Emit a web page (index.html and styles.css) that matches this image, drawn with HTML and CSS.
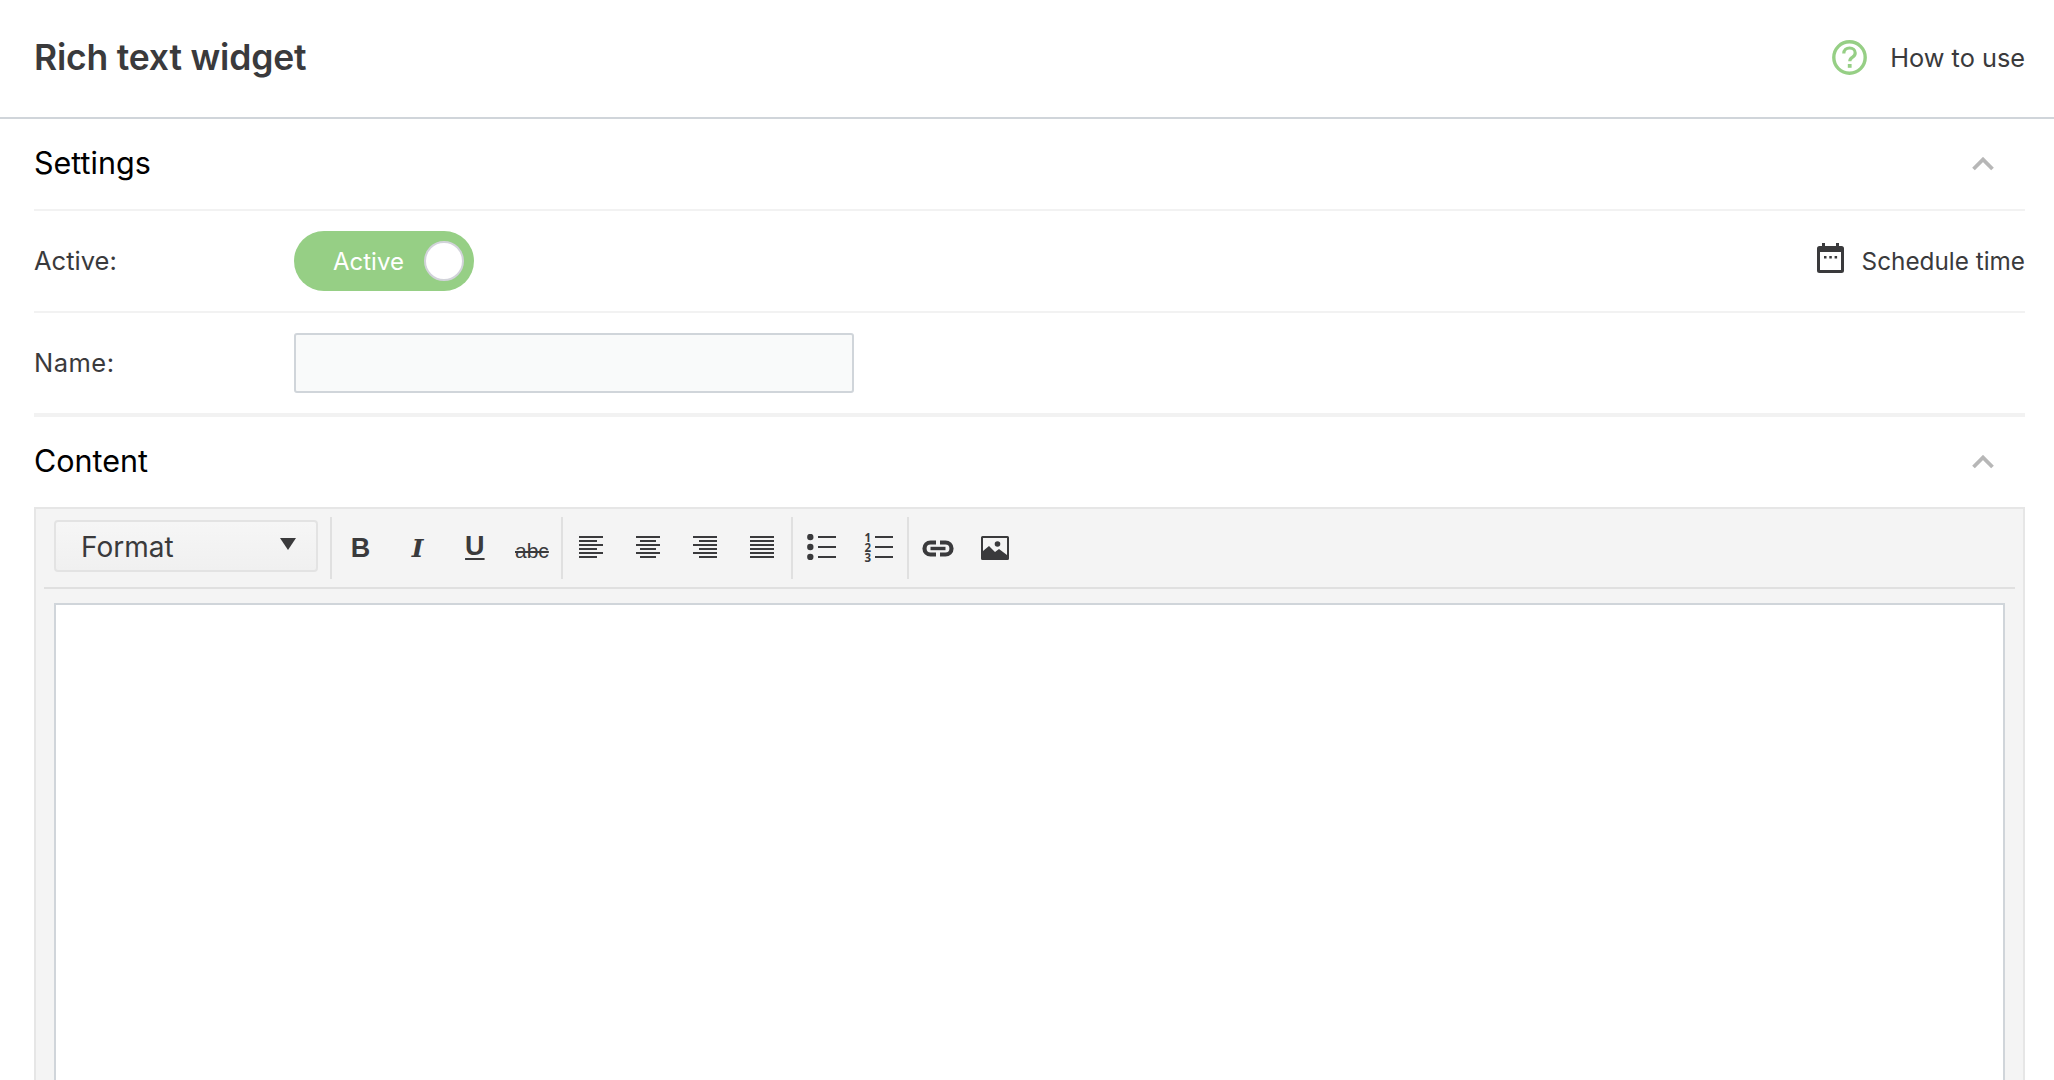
FILE: index.html
```html
<!DOCTYPE html>
<html lang="en">
<head>
<meta charset="utf-8">
<title>Rich text widget</title>
<link rel="stylesheet" href="styles.css">
</head>
<body>
<div class="page">
  <header class="topbar">
    <h1 class="title">Rich text widget</h1>
    <a class="help">
      <svg class="help-icon" viewBox="0 0 35 35"><circle cx="17.5" cy="17.5" r="15.7" fill="none" stroke="#96cf85" stroke-width="3.4"/><path d="M11.800 13.600c0-3.400 2.500-5.600 5.800-5.600 3.200 0 5.600 2 5.600 4.900 0 2-1 3.200-2.900 4.400-1.800 1.100-2.500 2-2.500 3.900" fill="none" stroke="#96cf85" stroke-width="3.200"/><rect x="15.800" y="24" width="3.800" height="3.800" fill="#96cf85"/></svg>
      <span>How to use</span>
    </a>
  </header>
  <main class="body">
    <section class="section-head settings-head">
      <h2 class="section-title">Settings</h2>
      <svg class="chevron" viewBox="0 0 22 14"><path d="M1.500 12L11 2.500 20.500 12" fill="none" stroke="#b7b7b7" stroke-width="3.800"/></svg>
    </section>
    <div class="row row-active">
      <span class="label">Active:</span>
      <div class="toggle"><span class="toggle-text">Active</span><span class="knob"></span></div>
      <a class="schedule">
        <svg class="cal-icon" viewBox="0 0 27 30"><path d="M5 0h3v3h11V0h3v3h2.500A2.500 2.500 0 0 1 27 5.500v22a2.500 2.500 0 0 1-2.500 2.500h-22A2.500 2.500 0 0 1 0 27.500v-22A2.500 2.500 0 0 1 2.500 3H5z" fill="#3a3a3c"/><rect x="3" y="9" width="21" height="18" fill="#fff"/><rect x="7" y="13" width="2.500" height="2.500" fill="#3a3a3c"/><rect x="12.300" y="13" width="2.500" height="2.500" fill="#3a3a3c"/><rect x="17.600" y="13" width="2.500" height="2.500" fill="#3a3a3c"/></svg>
        <span>Schedule time</span>
      </a>
    </div>
    <div class="row row-name">
      <label class="label label-name" for="name">Name:</label>
      <input class="text-input" id="name" type="text">
    </div>
    <section class="section-head content-head">
      <h2 class="section-title">Content</h2>
      <svg class="chevron" viewBox="0 0 22 14"><path d="M1.500 12L11 2.500 20.500 12" fill="none" stroke="#b7b7b7" stroke-width="3.800"/></svg>
    </section>
    <div class="editor">
      <div class="toolbar">
        <div class="format"><span>Format</span><i class="caret"></i></div>
        <div class="group group-4">
          <button class="tool tool-b">B</button>
          <button class="tool tool-i">I</button>
          <button class="tool tool-u">U</button>
          <button class="tool tool-s">abc</button>
        </div>
        <div class="group group-4">
          <button class="tool"><svg class="ico" viewBox="0 0 24 22"><path d="M0 1h24M0 5h18M0 9h24M0 13h18M0 17h24M0 21h18" stroke="#3a3a3c" stroke-width="2"/></svg></button>
          <button class="tool"><svg class="ico" viewBox="0 0 24 22"><path d="M0 1h24M4 5h16M0 9h24M4 13h16M0 17h24M4 21h16" stroke="#3a3a3c" stroke-width="2"/></svg></button>
          <button class="tool"><svg class="ico" viewBox="0 0 24 22"><path d="M0 1h24M6 5h18M0 9h24M6 13h18M0 17h24M6 21h18" stroke="#3a3a3c" stroke-width="2"/></svg></button>
          <button class="tool"><svg class="ico" viewBox="0 0 24 22"><path d="M0 1h24M0 5h24M0 9h24M0 13h24M0 17h24M0 21h24" stroke="#3a3a3c" stroke-width="2"/></svg></button>
        </div>
        <div class="group group-2">
          <button class="tool"><svg class="ico-list" viewBox="0 0 29 26"><circle cx="3.300" cy="3" r="3.200" fill="#3a3a3c"/><circle cx="3.300" cy="13" r="3.200" fill="#3a3a3c"/><circle cx="3.300" cy="23" r="3.200" fill="#3a3a3c"/><path d="M11 3h18M11 13h18M11 23h18" stroke="#3a3a3c" stroke-width="2"/></svg></button>
          <button class="tool tool-num"><span class="nums">1<br>2<br>3</span><svg class="ico-lines" viewBox="0 0 18 26"><path d="M0 3h18M0 13h18M0 23h18" stroke="#3a3a3c" stroke-width="2"/></svg></button>
        </div>
        <div class="group group-2">
          <button class="tool"><svg class="ico-link" viewBox="0 0 32 17"><path d="M14 2.500H8.500a6 6 0 0 0 0 12H14M18 2.500h5.500a6 6 0 0 1 0 12H18" fill="none" stroke="#3a3a3c" stroke-width="4.200"/><path d="M8.500 8.500h15" stroke="#3a3a3c" stroke-width="3.400"/></svg></button>
          <button class="tool"><svg class="ico-img" viewBox="0 0 28 24"><path d="M1.500 0h25A1.500 1.500 0 0 1 28 1.500v21a1.500 1.500 0 0 1-1.500 1.500h-25A1.500 1.500 0 0 1 0 22.500v-21A1.500 1.500 0 0 1 1.500 0zM2 2v13l6-5 6 6 4-3 8 6V2z" fill="#3a3a3c" fill-rule="evenodd"/><circle cx="16.500" cy="8" r="2.800" fill="#3a3a3c"/></svg></button>
        </div>
      </div>
      <div class="editor-area"></div>
    </div>
  </main>
</div>
</body>
</html>
```
FILE: styles.css
```css
* { box-sizing: border-box; }
html, body { margin: 0; height: 100%; overflow: hidden; background: #fff; }
body { font-family: Inter, "Liberation Sans", sans-serif; color: #3a3a3c; }
.page { height: 1080px; overflow: hidden; }
.topbar { height: 119px; border-bottom: 2px solid #d0d5da; padding: 0 29px 2px 34px; display: flex; align-items: center; justify-content: space-between; }
.title { margin: 0; font-size: 35.500px; font-weight: 600; letter-spacing: -0.2px; }
.help { display: flex; align-items: center; gap: 23px; font-size: 25.300px; }
.help-icon { width: 35px; height: 35px; }
.body { padding: 0 29px 0 34px; }
.section-head { display: flex; align-items: center; justify-content: space-between; padding-right: 31px; }
.settings-head { height: 92px; border-bottom: 2px solid #f2f2f2; }
.content-head { height: 90px; }
.section-title { margin: 0 0 3px; font-size: 30.500px; font-weight: 400; color: #000; }
.chevron { width: 22px; height: 14px; }
.row { display: flex; align-items: center; height: 102px; border-bottom: 2px solid #f2f2f2; }
.row-name { height: 104px; border-bottom-width: 4px; }
.label { width: 260px; font-size: 25.500px; margin-bottom: 2px; }
.label-name { letter-spacing: 0.5px; }
.toggle { width: 180px; height: 60px; border-radius: 30px; background: #96cf85; display: flex; align-items: center; justify-content: space-between; padding: 0 10px 0 39px; }
.toggle-text { color: #fff; font-size: 24px; }
.knob { width: 40px; height: 40px; border-radius: 50%; background: #fff; border: 2px solid #d2d3da; }
.schedule { margin-left: auto; display: flex; align-items: center; gap: 18px; font-size: 24.300px; }
.cal-icon { width: 27px; height: 30px; margin-top: -6px; }
.text-input { width: 560px; height: 60px; background: #f9fafa; border: 2px solid #d0d5da; border-radius: 3px; }
.editor { border: 2px solid #e6e6e6; border-bottom: 0; background: #f4f4f4; height: 620px; padding: 0 8px; }
.toolbar { height: 80px; border-bottom: 2px solid #e0e0e0; display: flex; align-items: flex-start; padding-left: 10px; padding-top: 8px; }
.format { width: 264px; height: 52px; margin-top: 3px; margin-right: 12px; border: 2px solid #e3e3e3; border-radius: 4px; background: linear-gradient(#f6f6f6, #f0f0f0); display: flex; align-items: center; justify-content: space-between; padding: 2px 20px 0 25px; font-size: 28px; }
.caret { width: 0; height: 0; border-left: 8px solid transparent; border-right: 8px solid transparent; border-top: 12px solid #3a3a3c; margin-top: -6px; }
.group { height: 62px; border-left: 2px solid #e0e0e0; display: flex; align-items: center; }
.group-4 { width: 230.500px; }
.group-2 { width: 116px; }
.tool { flex: 1; height: 100%; border: 0; padding: 0; background: none; color: #3a3a3c; display: flex; align-items: center; justify-content: center; }
.tool-num { gap: 2px; }
.ico { width: 24px; height: 22px; margin-bottom: 2px; }
.ico-list { width: 29px; height: 26px; margin-bottom: 2px; }
.ico-lines { width: 18px; height: 26px; margin-bottom: 2px; }
.ico-link { width: 32px; height: 17px; }
.ico-img { width: 28px; height: 24px; }
.nums { width: 8px; font-family: "Open Sans", sans-serif; font-size: 11.500px; line-height: 10px; font-weight: 700; text-align: left; }
.tool-b { font-family: "Liberation Sans", sans-serif; font-weight: 700; font-size: 27px; }
.tool-i { font-family: "DejaVu Serif", serif; font-weight: 700; font-style: italic; font-size: 25px; }
.tool-u { font-family: "Liberation Sans", sans-serif; font-weight: 700; font-size: 27px; text-decoration: underline; text-underline-offset: 3px; padding-bottom: 4px; }
.tool-s { font-family: "Liberation Sans", sans-serif; font-size: 21px; text-decoration: line-through; padding-top: 5px; }
.editor-area { height: 520px; margin: 14px 10px 0; background: #fff; border: 2px solid #d0d5da; }
```
